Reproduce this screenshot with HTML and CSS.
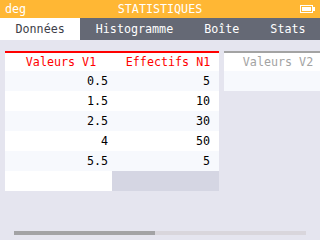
FILE: index.html
```html
<!DOCTYPE html>
<html>
<head>
<meta charset="utf-8">
<link rel="stylesheet" href="styles.css">
</head>
<body>
<div class="screen">
  <header class="title">
    <span class="unit">deg</span>
    <span class="name">STATISTIQUES</span>
    <span class="status">
      <svg class="battery" width="15" height="8" viewBox="0 0 15 8">
        <rect x="0.5" y="0.5" width="12" height="7" fill="none" stroke="#fff" stroke-width="1"/>
        <rect x="2" y="2" width="9" height="4" fill="#fff"/>
        <rect x="13" y="2" width="2" height="4" fill="#fff"/>
      </svg>
    </span>
  </header>
  <nav class="tabs">
    <div class="tab active">Données</div>
    <div class="tab">Histogramme</div>
    <div class="tab">Boîte</div>
    <div class="tab">Stats</div>
  </nav>
  <main class="content">
    <div class="table main-table">
      <div class="th th1">Valeurs V1</div>
      <div class="th th2">Effectifs N1</div>
      <div class="td c1 odd">0.5</div><div class="td c2 odd">5</div>
      <div class="td c1">1.5</div><div class="td c2">10</div>
      <div class="td c1 odd">2.5</div><div class="td c2 odd">30</div>
      <div class="td c1">4</div><div class="td c2">50</div>
      <div class="td c1 odd">5.5</div><div class="td c2 odd">5</div>
      <div class="td c1"></div><div class="td c2 disabled"></div>
    </div>
    <div class="table side-table">
      <div class="th th3">Valeurs V2</div>
      <div class="td odd"></div>
    </div>
  </main>
  <div class="scroll"><div class="thumb"></div></div>
</div>
</body>
</html>
```
FILE: styles.css
```css
* { box-sizing: border-box; margin: 0; padding: 0; }
html, body { width: 320px; height: 240px; overflow: hidden; }
body { background: #e5e5ef; font-family: "DejaVu Sans Mono", "Liberation Mono", monospace; font-size: 11.7px; }
.screen { width: 320px; height: 240px; display: flex; flex-direction: column; background: #e5e5ef; }
.title {
  height: 18px; background: #ffb734; color: #fff;
  display: grid; grid-template-columns: 1fr auto 1fr; align-items: center;
  padding: 0 5px; line-height: 18px;
}
.status { display: flex; justify-content: flex-end; }
.battery { display: block; }
.tabs { height: 22px; display: flex; background: #656975; }
.tab { color: #fff; text-align: center; line-height: 22px; padding: 0 15.5px; white-space: nowrap; }
.tab.active { background: #fff; color: #3e3e48; }
.content { flex: 1; display: flex; align-items: flex-start; gap: 5px; padding: 11px 0 0 5px; }
.table { display: grid; grid-auto-rows: 20px; }
.main-table { grid-template-columns: 107px 107px; border-top: 2px solid #ff0000; grid-template-rows: 18px; }
.side-table { grid-template-columns: 103px; width: 96px; overflow: hidden; border-top: 2px solid #a3a3a3; grid-template-rows: 18px; }
.th { background: #fff; color: #ff0000; text-align: center; line-height: 18px; padding-left: 5px; white-space: nowrap; }
.th3 { color: #a3a3a3; }
.td { background: #fff; color: #000; text-align: right; line-height: 20px; }
.td.odd { background: #f7f9fd; }
.c1 { padding-right: 4px; }
.c2 { padding-right: 9px; }
.td.disabled { background: #d5d6e3; }
.scroll { height: 4px; margin: 0 14px 5px 14px; background: #d9d6dc; }
.thumb { width: 141px; height: 4px; background: #a3a3a5; }
```
